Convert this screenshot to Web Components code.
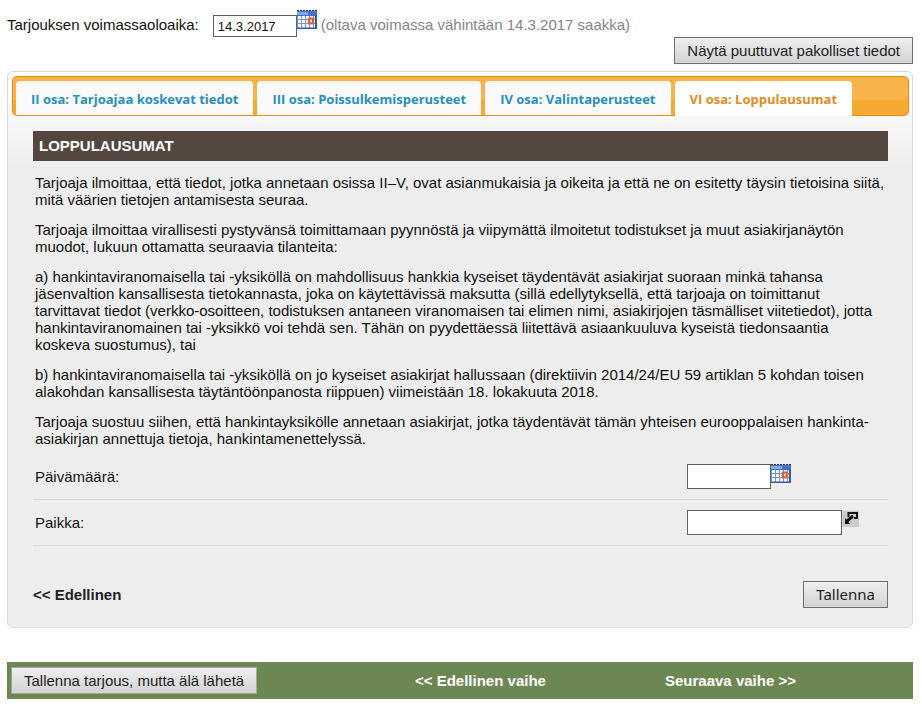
<!DOCTYPE html>
<html lang="fi">
<head>
<meta charset="utf-8">
<title>Tarjous - Loppulausumat</title>
<style>
  body {
    margin: 0;
    padding: 10px 9px 7px 7px;
    background: #fff;
    color: #111;
    font: 15px/17px "Liberation Sans", Arial, sans-serif;
  }

  p {
    margin: 0 0 13px;
  }
</style>
</head>
<body>
  <offer-validity label="Tarjouksen voimassaoloaika:" value="14.3.2017">(oltava voimassa vähintään 14.3.2017 saakka)</offer-validity>

  <tab-panel tabs='["II osa: Tarjoajaa koskevat tiedot", "III osa: Poissulkemisperusteet", "IV osa: Valintaperusteet", "VI osa: Loppulausumat"]' active="3">
    <form-section heading="LOPPULAUSUMAT">
      <p>Tarjoaja ilmoittaa, että tiedot, jotka annetaan osissa II–V, ovat asianmukaisia ja oikeita ja että ne on esitetty täysin tietoisina siitä, mitä väärien tietojen antamisesta seuraa.</p>
      <p>Tarjoaja ilmoittaa virallisesti pystyvänsä toimittamaan pyynnöstä ja viipymättä ilmoitetut todistukset ja muut asiakirjanäytön muodot, lukuun ottamatta seuraavia tilanteita:</p>
      <p>a) hankintaviranomaisella tai -yksiköllä on mahdollisuus hankkia kyseiset täydentävät asiakirjat suoraan minkä tahansa jäsenvaltion kansallisesta tietokannasta, joka on käytettävissä maksutta (sillä edellytyksellä, että tarjoaja on toimittanut tarvittavat tiedot (verkko-osoitteen, todistuksen antaneen viranomaisen tai elimen nimi, asiakirjojen täsmälliset viitetiedot), jotta hankintaviranomainen tai -yksikkö voi tehdä sen. Tähän on pyydettäessä liitettävä asiaankuuluva kyseistä tiedonsaantia koskeva suostumus), tai</p>
      <p>b) hankintaviranomaisella tai -yksiköllä on jo kyseiset asiakirjat hallussaan (direktiivin 2014/24/EU 59 artiklan 5 kohdan toisen alakohdan kansallisesta täytäntöönpanosta riippuen) viimeistään 18. lokakuuta 2018.</p>
      <p>Tarjoaja suostuu siihen, että hankintayksikölle annetaan asiakirjat, jotka täydentävät tämän yhteisen eurooppalaisen hankinta-asiakirjan annettuja tietoja, hankintamenettelyssä.</p>
      <form-row slot="fields" label="Päivämäärä:" type="date"></form-row>
      <form-row slot="fields" label="Paikka:" type="text"></form-row>
    </form-section>
  </tab-panel>

  <step-bar></step-bar>

<script>
const calendarIcon = `<svg width="20" height="19" viewBox="0 0 20 19" aria-hidden="true">
  <path d="M0 1h20v18H0z" fill="#6f95dc"/>
  <path d="M0 1h20v5H0z" fill="#4470d0"/>
  <path d="M0 2h11v3H0z" fill="#84a8f0"/>
  <path d="M0 .5h20" stroke="#26334f" stroke-dasharray="2 1"/>
  <path d="M1 6h17v12H1z" fill="#fff"/>
  <path d="M1 9.5h17M1 13.5h17M4.5 6v12M8.5 6v12M12.5 6v12M16.5 6v12" stroke="#6f97e2"/>
  <path d="M12 8.5h4v5h-4z" fill="#f5cfc5" stroke="#db5b43" stroke-width="2"/>
  <path d="M19 5v14M0 18.5h20" stroke="#345aa8" stroke-width="2"/>
</svg>`;

const pickIcon = `<svg width="17" height="17" viewBox="0 0 17 17" aria-hidden="true">
  <path d="M0 0h17v17H0z" fill="#cbcbcb"/>
  <path d="M0 0h17v1H0z" fill="#e2e2e2"/>
  <path d="M6.5 3h8.5v5H12M6.5 2v5" fill="none" stroke="#111" stroke-width="2"/>
  <path d="M11 6l-6 5" stroke="#111" stroke-width="3"/>
  <path d="M3 8v6h5z" fill="#111"/>
</svg>`;

const fieldStyle = `
  input {
    box-sizing: border-box;
    margin: 0;
    padding: 0 4px;
    border: 1px solid #606060;
    border-radius: 0;
    background: #fff;
    color: #111;
    font: 13px/17px "Liberation Sans", Arial, sans-serif;
  }

  .icon {
    display: block;
    padding: 0;
    border: 0;
    background: none;
    line-height: 0;
    cursor: pointer;
  }
`;

class GreyButton extends HTMLElement {
  constructor() {
    super();
    this.attachShadow({ mode: "open" });
  }

  connectedCallback() {
    this.shadowRoot.innerHTML = `
      <style>
        :host {
          display: block;
        }

        button {
          display: block;
          box-sizing: border-box;
          height: 27px;
          padding: 0 12px;
          border: 1px solid var(--button-border, #707070);
          background: linear-gradient(#efefef, #d2d2d2);
          color: #222;
          font: inherit;
          white-space: nowrap;
        }
      </style>
      <button type="button"><slot></slot></button>`;
  }
}

class OfferValidity extends HTMLElement {
  constructor() {
    super();
    this.attachShadow({ mode: "open" });
  }

  connectedCallback() {
    this.shadowRoot.innerHTML = `
      <style>
        ${fieldStyle}
        :host {
          display: block;
        }

        .line {
          display: flex;
          align-items: flex-end;
          min-height: 27px;
        }

        label, .hint {
          padding-bottom: 4px;
        }

        label {
          margin-right: 14px;
        }

        input {
          width: 84px;
          height: 22px;
        }

        .icon {
          align-self: flex-start;
        }

        .hint {
          margin-left: 4px;
          color: #858585;
        }

        grey-button {
          width: fit-content;
          margin-left: auto;
        }
      </style>
      <div class="line">
        <label for="valid">${this.getAttribute("label")}</label>
        <input id="valid" type="text" value="${this.getAttribute("value")}">
        <button class="icon" type="button" aria-label="Kalenteri">${calendarIcon}</button>
        <span class="hint"><slot></slot></span>
      </div>
      <grey-button>Näytä puuttuvat pakolliset tiedot</grey-button>`;
  }
}

class TabPanel extends HTMLElement {
  constructor() {
    super();
    this.attachShadow({ mode: "open" });
  }

  connectedCallback() {
    this.tabs = JSON.parse(this.getAttribute("tabs") || "[]");
    this.render();
  }

  render() {
    const active = Number(this.getAttribute("active"));
    const tabs = this.tabs
      .map((title, i) => `<a href="#osa-${i}" class="${i === active ? "active" : ""}">${title}</a>`)
      .join("");

    this.shadowRoot.innerHTML = `
      <style>
        :host {
          display: block;
          margin-top: 7px;
          padding: 4px 3px 19px 4px;
          border: 1px solid #d9d9d9;
          border-radius: 6px;
          background: linear-gradient(#fff, #f6f6f6 50px, #ededed 100px);
        }

        nav {
          display: flex;
          gap: 4px;
          box-sizing: border-box;
          height: 40px;
          padding: 4px 3px 0;
          border: 1px solid #e08c18;
          border-radius: 5px;
          background: linear-gradient(#f8b34b 60%, #f6a931 60%);
        }

        a {
          padding: 0 15px;
          border-radius: 4px 4px 0 0;
          background: linear-gradient(#f4f4f4, #fafafa 5px);
          color: #2a8fb8;
          font: bold 13px/36px "Open Sans", "Trebuchet MS", sans-serif;
          text-decoration: none;
          white-space: nowrap;
        }

        a.active {
          margin-bottom: -1px;
          background: #fff;
          color: #e08d1e;
        }

        .content {
          padding: 15px 21px 0;
        }
      </style>
      <nav>${tabs}</nav>
      <div class="content"><slot></slot></div>`;
  }
}

class FormSection extends HTMLElement {
  constructor() {
    super();
    this.attachShadow({ mode: "open" });
  }

  connectedCallback() {
    this.shadowRoot.innerHTML = `
      <style>
        :host {
          display: block;
        }

        h2 {
          margin: 0;
          padding: 0 6px;
          background: #544740;
          color: #fff;
          font: bold 15px/30px "Liberation Sans", Arial, sans-serif;
        }

        .text {
          padding: 13px 2px 0;
        }

        ::slotted(p:last-of-type) {
          margin-bottom: 7px !important;
        }

        .actions {
          display: flex;
          align-items: center;
          justify-content: space-between;
          margin-top: 35px;
        }

        .actions a {
          color: #222;
          font-weight: bold;
          text-decoration: none;
        }

        grey-button {
          font-family: "Noto Sans", sans-serif;
        }
      </style>
      <h2>${this.getAttribute("heading")}</h2>
      <div class="text"><slot></slot></div>
      <slot name="fields"></slot>
      <div class="actions">
        <a href="#edellinen">&lt;&lt; Edellinen</a>
        <grey-button>Tallenna</grey-button>
      </div>`;
  }
}

class FormRow extends HTMLElement {
  constructor() {
    super();
    this.attachShadow({ mode: "open" });
  }

  connectedCallback() {
    const isDate = this.getAttribute("type") === "date";

    this.shadowRoot.innerHTML = `
      <style>
        ${fieldStyle}
        :host {
          display: grid;
          grid-template-columns: 1fr 201px;
          align-items: center;
          box-sizing: border-box;
          height: 46px;
          padding-left: 2px;
          border-bottom: 1px solid #d9dad8;
        }

        .field {
          display: flex;
          align-items: flex-start;
        }

        input {
          width: ${isDate ? 84 : 155}px;
          height: 25px;
        }
      </style>
      <label for="field">${this.getAttribute("label")}</label>
      <div class="field">
        <input id="field" type="text">
        <button class="icon" type="button" aria-label="Valitse">${isDate ? calendarIcon : pickIcon}</button>
      </div>`;
  }
}

class StepBar extends HTMLElement {
  constructor() {
    super();
    this.attachShadow({ mode: "open" });
  }

  connectedCallback() {
    this.shadowRoot.innerHTML = `
      <style>
        :host {
          display: grid;
          grid-template-columns: 404fr 250fr 248fr;
          align-items: center;
          box-sizing: border-box;
          height: 37px;
          margin-top: 34px;
          padding-left: 4px;
          background: #6d8752;
          --button-border: #a3a79c;
        }

        a {
          color: #fff;
          font-weight: bold;
          text-decoration: none;
        }
      </style>
      <grey-button>Tallenna tarjous, mutta älä lähetä</grey-button>
      <a href="#edellinen-vaihe">&lt;&lt; Edellinen vaihe</a>
      <a href="#seuraava-vaihe">Seuraava vaihe &gt;&gt;</a>`;
  }
}

customElements.define("grey-button", GreyButton);
customElements.define("offer-validity", OfferValidity);
customElements.define("tab-panel", TabPanel);
customElements.define("form-section", FormSection);
customElements.define("form-row", FormRow);
customElements.define("step-bar", StepBar);
</script>
</body>
</html>
